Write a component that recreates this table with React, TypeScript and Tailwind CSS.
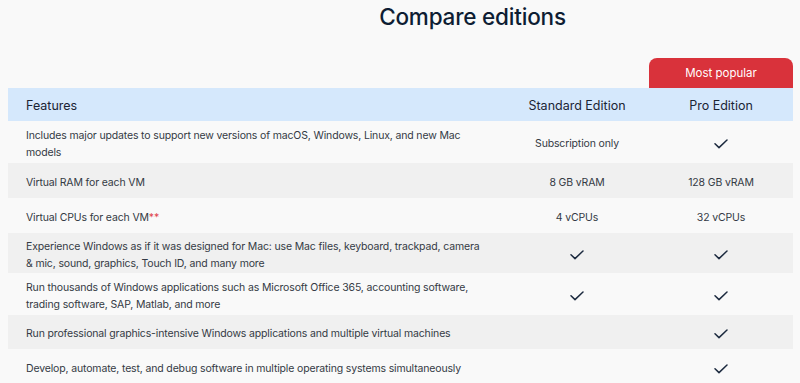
import React from "react";

const Check = () => (
  <svg width="14" height="10" viewBox="0 0 14 10" fill="none" className="inline-block">
    <path d="M1 4.8 L5 8.6 L13 1" stroke="#1c2a3f" strokeWidth="1.5" strokeLinecap="round" strokeLinejoin="round" />
  </svg>
);

type Row = {
  feature: React.ReactNode;
  std: React.ReactNode;
  pro: React.ReactNode;
  h: string;
  alt: boolean;
};

const rows: Row[] = [
  {
    feature: (
      <>
        Includes major updates to support new versions of macOS, Windows, Linux, and new Mac
        <br />
        models
      </>
    ),
    std: "Subscription only",
    pro: <Check />,
    h: "h-[42px]",
    alt: false,
  },
  { feature: "Virtual RAM for each VM", std: "8 GB vRAM", pro: "128 GB vRAM", h: "h-[35px]", alt: true },
  {
    feature: (
      <>
        Virtual CPUs for each VM<span className="text-[#e0444c]">**</span>
      </>
    ),
    std: "4 vCPUs",
    pro: "32 vCPUs",
    h: "h-[35px]",
    alt: false,
  },
  {
    feature: (
      <>
        Experience Windows as if it was designed for Mac: use Mac files, keyboard, trackpad, camera
        <br />
        &amp; mic, sound, graphics, Touch ID, and many more
      </>
    ),
    std: <Check />,
    pro: <Check />,
    h: "h-[40px]",
    alt: true,
  },
  {
    feature: (
      <>
        Run thousands of Windows applications such as Microsoft Office 365, accounting software,
        <br />
        trading software, SAP, Matlab, and more
      </>
    ),
    std: <Check />,
    pro: <Check />,
    h: "h-[42px]",
    alt: false,
  },
  {
    feature: "Run professional graphics-intensive Windows applications and multiple virtual machines",
    std: "",
    pro: <Check />,
    h: "h-[34px]",
    alt: true,
  },
  {
    feature: "Develop, automate, test, and debug software in multiple operating systems simultaneously",
    std: "",
    pro: <Check />,
    h: "h-[36px]",
    alt: false,
  },
];

export default function App() {
  return (
    <div
      className="w-[800px] h-[383px] overflow-hidden bg-[#f9f9f9]"
      style={{ fontFamily: "Inter, 'Noto Sans', sans-serif" }}
    >
      <div className="pl-[145px] pt-[1px] h-[58px] text-center">
        <h1 className="text-[22.5px] leading-[32px] text-[#0e1d33] tracking-[-0.2px] font-[450]">Compare editions</h1>
      </div>
      <div className="px-[8px] pr-[7px]">
        <div className="flex h-[30px]">
          <div className="flex-1" />
          <div className="w-[144px] bg-[#d9323b] rounded-t-[8px] flex items-center justify-center pt-[1px] text-white text-[11.5px]">
            Most popular
          </div>
        </div>
        <div className="flex h-[33px] items-center pt-[3px] bg-[#d5e8fc] text-[#1b2434] text-[12.5px]">
          <div className="flex-1 pl-[18px]">Features</div>
          <div className="w-[144px] text-center">Standard Edition</div>
          <div className="w-[144px] text-center">Pro Edition</div>
        </div>
        {rows.map((r, i) => (
          <div
            key={i}
            className={`flex items-center pt-[3px] ${r.h} ${r.alt ? "bg-[#f0f0f0]" : "bg-[#f9f9f9]"} text-[#343a44] text-[10.5px] leading-[17px] tracking-[-0.15px]`}
          >
            <div className="flex-1 pl-[18px] whitespace-nowrap">{r.feature}</div>
            <div className="w-[144px] text-center flex justify-center">{r.std}</div>
            <div className="w-[144px] text-center flex justify-center">{r.pro}</div>
          </div>
        ))}
      </div>
    </div>
  );
}
